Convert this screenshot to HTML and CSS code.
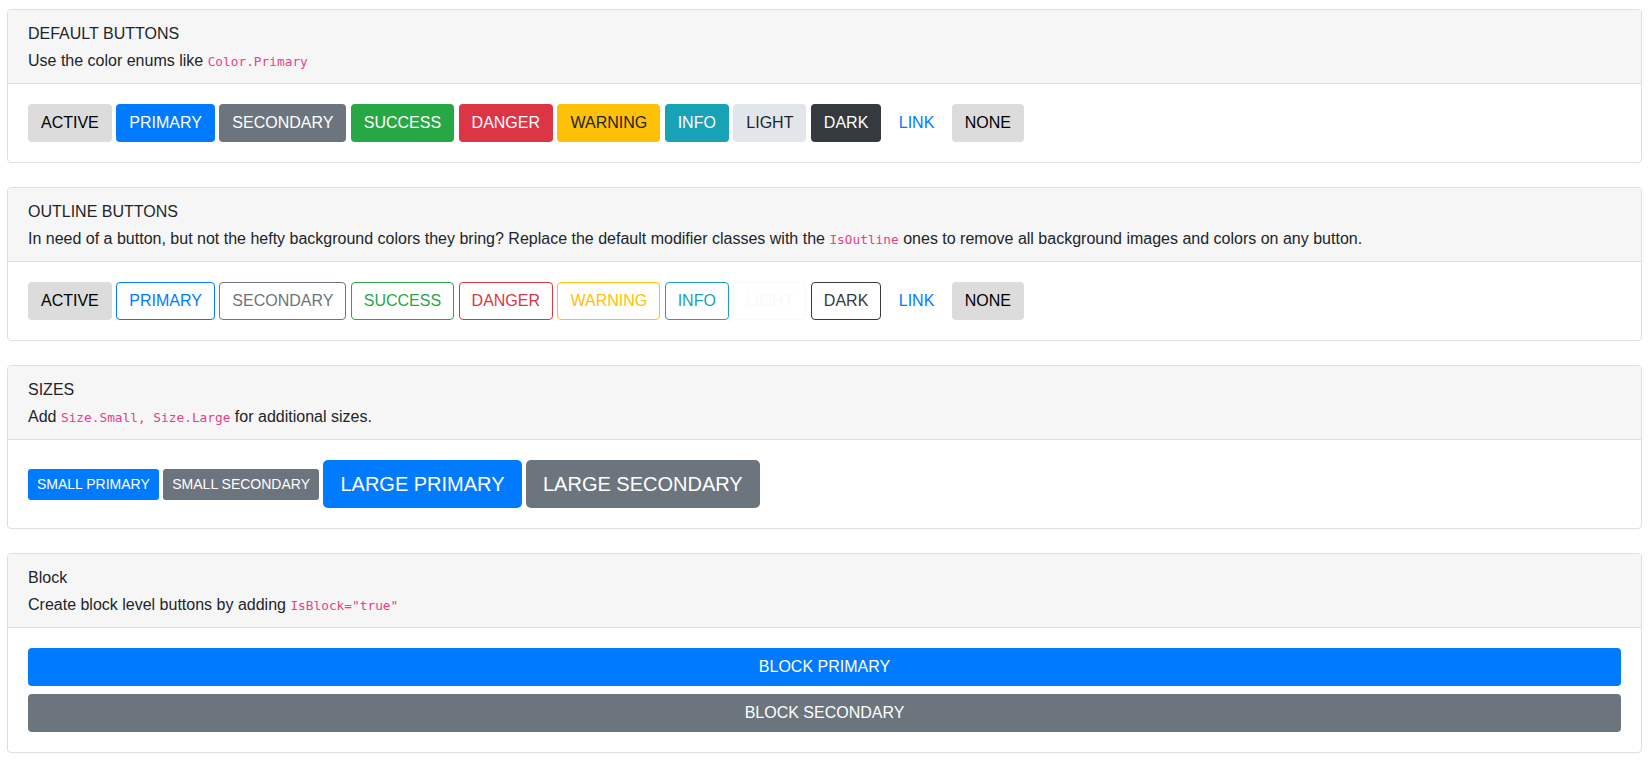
FILE: index.html
```html
<!DOCTYPE html>
<html lang="en">
<head>
  <meta charset="UTF-8">
  <meta name="viewport" content="width=device-width, initial-scale=1">
  <title>Buttons</title>
  <link rel="stylesheet" href="styles.css">
</head>
<body>
  <main class="page">

    <section class="card">
      <div class="card-header">
        <div class="card-title">DEFAULT BUTTONS</div>
        <p class="card-text">Use the color enums like <code>Color.Primary</code></p>
      </div>
      <div class="card-body">
        <button class="btn btn-active">ACTIVE</button>
        <button class="btn btn-primary">PRIMARY</button>
        <button class="btn btn-secondary">SECONDARY</button>
        <button class="btn btn-success">SUCCESS</button>
        <button class="btn btn-danger">DANGER</button>
        <button class="btn btn-warning">WARNING</button>
        <button class="btn btn-info">INFO</button>
        <button class="btn btn-light">LIGHT</button>
        <button class="btn btn-dark">DARK</button>
        <button class="btn btn-link">LINK</button>
        <button class="btn btn-none">NONE</button>
      </div>
    </section>

    <section class="card">
      <div class="card-header">
        <div class="card-title">OUTLINE BUTTONS</div>
        <p class="card-text">In need of a button, but not the hefty background colors they bring? Replace the default modifier classes with the <code>IsOutline</code> ones to remove all background images and colors on any button.</p>
      </div>
      <div class="card-body">
        <button class="btn btn-active">ACTIVE</button>
        <button class="btn btn-outline-primary">PRIMARY</button>
        <button class="btn btn-outline-secondary">SECONDARY</button>
        <button class="btn btn-outline-success">SUCCESS</button>
        <button class="btn btn-outline-danger">DANGER</button>
        <button class="btn btn-outline-warning">WARNING</button>
        <button class="btn btn-outline-info">INFO</button>
        <button class="btn btn-outline-light">LIGHT</button>
        <button class="btn btn-outline-dark">DARK</button>
        <button class="btn btn-link">LINK</button>
        <button class="btn btn-none">NONE</button>
      </div>
    </section>

    <section class="card">
      <div class="card-header">
        <div class="card-title">SIZES</div>
        <p class="card-text">Add <code>Size.Small, Size.Large</code> for additional sizes.</p>
      </div>
      <div class="card-body">
        <button class="btn btn-sm btn-primary">SMALL PRIMARY</button>
        <button class="btn btn-sm btn-secondary">SMALL SECONDARY</button>
        <button class="btn btn-lg btn-primary">LARGE PRIMARY</button>
        <button class="btn btn-lg btn-secondary">LARGE SECONDARY</button>
      </div>
    </section>

    <section class="card">
      <div class="card-header">
        <div class="card-title">Block</div>
        <p class="card-text">Create block level buttons by adding <code>IsBlock="true"</code></p>
      </div>
      <div class="card-body card-body-stack">
        <button class="btn btn-block btn-primary">BLOCK PRIMARY</button>
        <button class="btn btn-block btn-secondary">BLOCK SECONDARY</button>
      </div>
    </section>

  </main>
</body>
</html>
```

FILE: styles.css
```css
body {
  margin: 0;
  font-family: 'Liberation Sans', Arial, sans-serif;
  font-size: 16px;
  line-height: 24px;
  color: #212529;
  background-color: #ffffff;
}

.page {
  padding: 9px 9px 0 7px;
}

.card {
  border: 1px solid #dfdfdf;
  border-radius: 4px;
  margin-bottom: 24px;
  overflow: hidden;
}

.card-header {
  background-color: #f6f6f6;
  border-bottom: 1px solid #dfdfdf;
  padding: 12px 20px 9px;
}

.card-title {
  line-height: 24px;
  margin-bottom: 3px;
}

.card-text {
  margin: 0;
  line-height: 24px;
}

code {
  font-family: 'DejaVu Sans Mono', 'Liberation Mono', monospace;
  font-size: 12.8px;
  color: #e83e8c;
}

.card-body {
  padding: 20px;
  display: flex;
  align-items: center;
  flex-wrap: wrap;
  gap: 4.45px;
}

.card-body-stack {
  flex-direction: column;
  align-items: stretch;
  gap: 8px;
}

/* buttons */

.btn {
  font-family: inherit;
  font-size: 16px;
  line-height: 24px;
  padding: 6px 12px;
  border: 1px solid transparent;
  border-radius: 4px;
  background: transparent;
  color: #212529;
  cursor: pointer;
}

.btn-sm {
  font-size: 14px;
  line-height: 21px;
  padding: 4px 8px;
  border-radius: 3px;
}

.btn-lg {
  font-size: 20px;
  line-height: 30px;
  padding: 8px 16px;
  border-radius: 5px;
}

.btn-block {
  display: block;
  width: 100%;
}

.btn-active,
.btn-none {
  background-color: #dcdcdc;
  color: #000000;
}

.btn-primary { background-color: #007bff; color: #ffffff; }
.btn-secondary { background-color: #6c757d; color: #ffffff; }
.btn-success { background-color: #28a745; color: #ffffff; }
.btn-danger { background-color: #dc3545; color: #ffffff; }
.btn-warning { background-color: #ffc107; color: #212529; }
.btn-info { background-color: #17a2b8; color: #ffffff; }
.btn-light { background-color: #e2e6ea; color: #212529; }
.btn-dark { background-color: #343a40; color: #ffffff; }
.btn-link { color: #007bff; }

.btn-outline-primary { border-color: #007bff; color: #007bff; }
.btn-outline-secondary { border-color: #6c757d; color: #6c757d; }
.btn-outline-success { border-color: #28a745; color: #28a745; }
.btn-outline-danger { border-color: #dc3545; color: #dc3545; }
.btn-outline-warning { border-color: #ffc107; color: #ffc107; }
.btn-outline-info { border-color: #17a2b8; color: #17a2b8; }
.btn-outline-light { border-color: #f8f9fa; color: #f8f9fa; }
.btn-outline-dark { border-color: #343a40; color: #343a40; }
```
